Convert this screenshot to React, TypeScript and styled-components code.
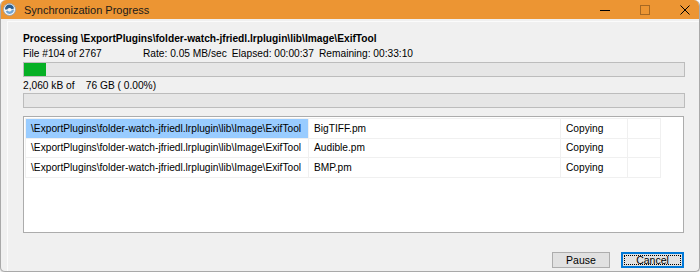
import styled, { createGlobalStyle } from "styled-components";

const GlobalStyle = createGlobalStyle`
  html, body {
    margin: 0;
    padding: 0;
    background: #ffffff;
  }
  body {
    font-family: "Liberation Sans", Arial, sans-serif;
  }
  * {
    box-sizing: border-box;
  }
`;

const Window = styled.div`
  width: 700px;
  height: 272px;
  display: flex;
  flex-direction: column;
  border: 1px solid #a9a9a9;
  border-top: none;
  border-radius: 6px 6px 5px 5px;
  overflow: hidden;
  box-shadow: 0 1px 2px rgba(0, 0, 0, 0.25);
  background: #f0f0f0;
`;

const TitleBar = styled.div`
  height: 19px;
  background: #ec9533;
  display: flex;
  align-items: center;
  padding: 0 9px 0 2px;
  flex-shrink: 0;
`;

const Title = styled.span`
  font-size: 11px;
  color: #1a1a1a;
  margin-left: 8px;
  flex: 1;
`;

const Controls = styled.div`
  display: flex;
  gap: 30px;
  align-items: center;
`;

const Control = styled.div<{ $dim?: boolean }>`
  width: 10px;
  height: 10px;
  display: flex;
  opacity: ${(p) => (p.$dim ? 0.3 : 1)};
`;

const Body = styled.div`
  flex: 1;
  display: flex;
  flex-direction: column;
  padding: 2px 0 0 6px;
`;

const Panel = styled.div`
  flex: 1;
  display: flex;
  flex-direction: column;
  border-top: 1px solid #fbfbfb;
  border-left: 1px solid #fbfbfb;
  padding: 9px 14px 0 15px;
  font-size: 10.2px;
  color: #000;
`;

const Heading = styled.div`
  font-weight: bold;
  line-height: 15px;
`;

const Stats = styled.div`
  display: flex;
  gap: 5px;
  line-height: 15px;

  & > span:first-child {
    width: 115px;
  }
`;

const Bar = styled.div`
  height: 15px;
  border: 1px solid #bcbcbc;
  background: #e6e6e6;
  margin-top: 1px;
`;

const Fill = styled.div`
  height: 100%;
  background: #06b025;
`;

const Amount = styled.div`
  white-space: pre;
  line-height: 15px;
  margin-top: 1px;
`;

const List = styled.div`
  height: 117px;
  margin-top: 8px;
  margin-right: 1px;
  border: 1px solid #acacac;
  background: #fff;
  padding: 1px;
`;

const Table = styled.table`
  border-collapse: collapse;
  table-layout: fixed;
  width: 635px;
  font-size: 10.2px;
`;

const Cell = styled.td<{ $w: number; $sel?: boolean }>`
  width: ${(p) => p.$w}px;
  height: 19.5px;
  padding: 0 0 0 5px;
  border: 1px solid #f0f0f0;
  background: ${(p) => (p.$sel ? "#99ccff" : "transparent")};
  white-space: nowrap;
  overflow: hidden;
`;

const Footer = styled.div`
  display: flex;
  justify-content: flex-end;
  gap: 11px;
  margin-top: 19px;
  padding-right: 1px;
`;

const Button = styled.button<{ $focus?: boolean }>`
  font-family: inherit;
  font-size: 10.5px;
  height: 16px;
  width: ${(p) => (p.$focus ? 63 : 58)}px;
  padding: 0;
  background: #e1e1e1;
  color: #000;
  border: 1px solid ${(p) => (p.$focus ? "#0078d7" : "#adadad")};
  box-shadow: ${(p) => (p.$focus ? "inset 0 0 0 1px #0078d7" : "none")};
  outline: ${(p) => (p.$focus ? "1px dotted #000" : "none")};
  outline-offset: -4px;
  line-height: 13px;
`;

const rows = ["BigTIFF.pm", "Audible.pm", "BMP.pm"];
const path = "\\ExportPlugins\\folder-watch-jfriedl.lrplugin\\lib\\Image\\ExifTool";

export default function App() {
  return (
    <>
      <GlobalStyle />
      <Window>
        <TitleBar>
          <svg width="13" height="13" viewBox="0 0 13 13">
            <circle cx="6.5" cy="6.5" r="6" fill="#f4f6f8" stroke="#8aa0b8" strokeWidth="0.8" />
            <path d="M2 6.5 A4.5 4.5 0 0 1 11 5.5 L8.6 6.2 A2.4 2.4 0 0 0 4.2 6.5 Z" fill="#2b5d8f" />
            <path d="M11 6.5 A4.5 4.5 0 0 1 2.6 8.6 L4.6 7.6 A2.4 2.4 0 0 0 8.8 6.8 Z" fill="#6fa4d4" />
          </svg>
          <Title>Synchronization Progress</Title>
          <Controls>
            <Control>
              <svg width="10" height="10" viewBox="0 0 10 10">
                <line x1="0" y1="5.5" x2="10" y2="5.5" stroke="#000" strokeWidth="1" />
              </svg>
            </Control>
            <Control $dim>
              <svg width="10" height="10" viewBox="0 0 10 10">
                <rect x="0.5" y="0.5" width="9" height="9" fill="none" stroke="#000" strokeWidth="1" />
              </svg>
            </Control>
            <Control>
              <svg width="10" height="10" viewBox="0 0 10 10">
                <path d="M0.5 0.5 L9.5 9.5 M9.5 0.5 L0.5 9.5" stroke="#000" strokeWidth="1" />
              </svg>
            </Control>
          </Controls>
        </TitleBar>
        <Body>
          <Panel>
            <Heading>Processing {path}</Heading>
            <Stats>
              <span>File #104 of 2767</span>
              <span>Rate: 0.05 MB/sec</span>
              <span>Elapsed: 00:00:37</span>
              <span>Remaining: 00:33:10</span>
            </Stats>
            <Bar>
              <Fill style={{ width: 22 }} />
            </Bar>
            <Amount>{"2,060 kB of    76 GB ( 0.00%)"}</Amount>
            <Bar style={{ marginTop: 0 }} />
            <List>
              <Table>
                <tbody>
                  {rows.map((name, i) => (
                    <tr key={name}>
                      <Cell $w={283} $sel={i === 0}>{path}</Cell>
                      <Cell $w={252}>{name}</Cell>
                      <Cell $w={67}>Copying</Cell>
                      <Cell $w={33} />
                    </tr>
                  ))}
                </tbody>
              </Table>
            </List>
            <Footer>
              <Button>Pause</Button>
              <Button $focus>Cancel</Button>
            </Footer>
          </Panel>
        </Body>
      </Window>
    </>
  );
}
